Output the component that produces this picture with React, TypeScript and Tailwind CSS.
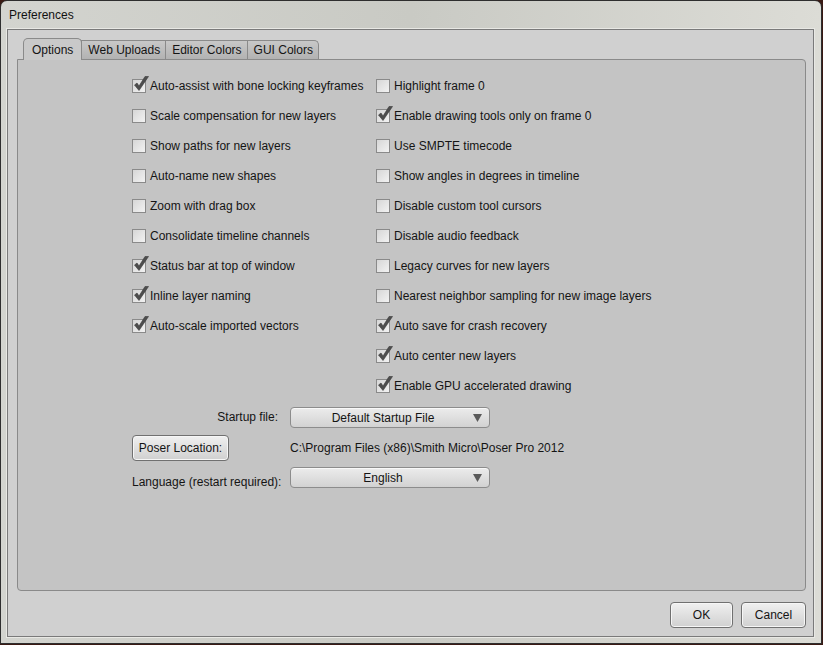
import React from 'react';

const leftOptions: [string, boolean][] = [
    ['Auto-assist with bone locking keyframes', true],
    ['Scale compensation for new layers', false],
    ['Show paths for new layers', false],
    ['Auto-name new shapes', false],
    ['Zoom with drag box', false],
    ['Consolidate timeline channels', false],
    ['Status bar at top of window', true],
    ['Inline layer naming', true],
    ['Auto-scale imported vectors', true],
];

const rightOptions: [string, boolean][] = [
    ['Highlight frame 0', false],
    ['Enable drawing tools only on frame 0', true],
    ['Use SMPTE timecode', false],
    ['Show angles in degrees in timeline', false],
    ['Disable custom tool cursors', false],
    ['Disable audio feedback', false],
    ['Legacy curves for new layers', false],
    ['Nearest neighbor sampling for new image layers', false],
    ['Auto save for crash recovery', true],
    ['Auto center new layers', true],
    ['Enable GPU accelerated drawing', true],
];

const tabs = ['Options', 'Web Uploads', 'Editor Colors', 'GUI Colors'];

function Checkbox({ label, checked }: { label: string; checked: boolean }) {
    return (
        <div className="h-[30px] flex items-center">
            <div className="relative w-[14px] h-[14px] border border-[#8a8a8a] bg-gradient-to-br from-[#d6d6d6] to-[#f2f2f2] shrink-0">
                {checked && (
                    <svg className="absolute left-[0px] top-[-5px]" width="17" height="18" viewBox="0 0 17 18">
                        <path d="M1.5 10 L6 15.5 L15.5 1.5 L12 1.5 L6 11 L4 8 Z" fill="#4d4d4d" stroke="#3a3a3a" strokeWidth="0.6" strokeLinejoin="round" />
                    </svg>
                )}
            </div>
            <span className="ml-[4px] text-[12px] text-[#141414] whitespace-nowrap">{label}</span>
        </div>
    );
}

function Dropdown({ value, className = '' }: { value: string; className?: string }) {
    return (
        <div className={`relative w-[200px] h-[21px] rounded-[4px] border border-[#8c8c8c] bg-gradient-to-b from-[#ececec] to-[#d2d2d2] flex items-center justify-center shadow-[inset_0_1px_0_#f8f8f8] ${className}`}>
            <span className="text-[12px] text-[#141414] -ml-[14px]">{value}</span>
            <svg className="absolute right-[7px] top-[6px]" width="9" height="8" viewBox="0 0 9 8">
                <path d="M0 0 L9 0 L4.5 8 Z" fill="#5a5a5a" />
            </svg>
        </div>
    );
}

function PushButton({ label, className = '' }: { label: string; className?: string }) {
    return (
        <div className={`h-[26px] rounded-[4px] border border-[#707070] bg-gradient-to-b from-[#f0f0f0] to-[#d0d0d0] shadow-[inset_0_0_0_1px_#f6f6f6] flex items-center justify-center text-[12px] text-[#141414] ${className}`}>
            {label}
        </div>
    );
}

export default function App() {
    return (
        <div
            className="w-[823px] h-[645px] bg-[#3a1a14] overflow-hidden"
            style={{ fontFamily: '"Liberation Sans", Arial, sans-serif' }}
        >
            <div className="w-[822px] h-[644px] rounded-t-[7px] border border-[#2e2e2e] bg-gradient-to-r from-[#d3d4cf] via-[#c9cac4] to-[#dcdcd6] flex flex-col">
                {/* title bar */}
                <div className="h-[28px] flex items-center pl-[8px] shrink-0">
                    <span className="text-[12px] text-[#111]">Preferences</span>
                </div>

                {/* client area */}
                <div className="ml-[6px] mr-[7px] flex-1 mb-[6px] border border-[#7a7a7a] bg-[#d0d0d0] shadow-[0_0_0_1px_#e8e8e4] flex flex-col pl-[9px] pr-[7px] pt-[8px]">
                    {/* tab strip */}
                    <div className="flex items-end h-[21px] pl-[6px] relative z-10">
                        {tabs.map((t, i) =>
                            i === 0 ? (
                                <div
                                    key={t}
                                    className="h-[22px] -mb-[1px] px-[8px] rounded-t-[5px] border border-b-0 border-[#8a8a8a] bg-[#c9c9c9] flex items-center text-[12px] text-[#141414]"
                                >
                                    {t}
                                </div>
                            ) : (
                                <div
                                    key={t}
                                    className={`h-[19px] pl-[6px] pr-[5px] border border-b-0 border-[#8a8a8a] bg-gradient-to-b from-[#c8c8c8] to-[#b2b2b2] flex items-center text-[12px] text-[#141414] -ml-[1px] ${i === tabs.length - 1 ? 'rounded-tr-[5px]' : ''}`}
                                >
                                    {t}
                                </div>
                            )
                        )}
                    </div>

                    {/* tab panel */}
                    <div className="h-[532px] shrink-0 rounded-b-[4px] rounded-tr-[4px] border border-[#8a8a8a] bg-[#c4c4c4] pl-[114px] pt-[11px]">
                        <div className="flex">
                            <div className="w-[244px]">
                                {leftOptions.map(([l, c]) => (
                                    <Checkbox key={l} label={l} checked={c} />
                                ))}
                            </div>
                            <div>
                                {rightOptions.map(([l, c]) => (
                                    <Checkbox key={l} label={l} checked={c} />
                                ))}
                            </div>
                        </div>

                        <div className="grid grid-cols-[146px_auto] gap-x-[12px] mt-[6px] items-start justify-start">
                            <span className="text-[12px] leading-[14px] text-[#141414] text-right pt-[3px]">Startup file:</span>
                            <Dropdown value="Default Startup File" />
                            <PushButton label="Poser Location:" className="w-[97px] justify-self-start mt-[7px]" />
                            <span className="text-[12px] leading-[14px] text-[#141414] whitespace-nowrap mt-[7px] pt-[6px]">
                                C:\Program Files (x86)\Smith Micro\Poser Pro 2012
                            </span>
                            <span className="text-[12px] leading-[14px] text-[#141414] whitespace-nowrap mt-[8px] pt-[6px]">Language (restart required):</span>
                            <Dropdown value="English" className="mt-[6px]" />
                        </div>
                    </div>

                    {/* dialog buttons */}
                    <div className="flex justify-end gap-[8px] mt-[11px]">
                        <PushButton label="OK" className="w-[63px] border-[#5e5e5e]" />
                        <PushButton label="Cancel" className="w-[65px]" />
                    </div>
                </div>
            </div>
        </div>
    );
}
